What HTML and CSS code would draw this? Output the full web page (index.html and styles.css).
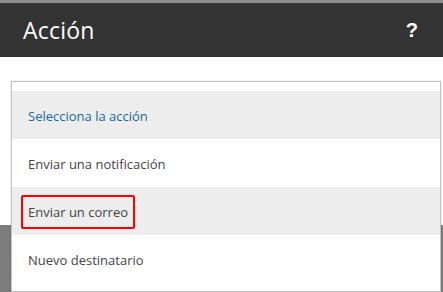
FILE: index.html
```html
<!DOCTYPE html>
<html lang="es">
<head>
<meta charset="utf-8">
<link rel="stylesheet" href="styles.css">
</head>
<body>
<div class="topstrip"></div>
<header class="header">
  <h1 class="title">Acción</h1>
  <span class="help">?</span>
</header>
<main class="main">
  <ul class="dropdown">
    <li class="item item-shaded item-placeholder">Selecciona la acción</li>
    <li class="item">Enviar una notificación</li>
    <li class="item item-shaded"><span class="highlight">Enviar un correo</span></li>
    <li class="item">Nuevo destinatario</li>
  </ul>
</main>
</body>
</html>
```
FILE: styles.css
```css
html, body {
  margin: 0;
  padding: 0;
}
body {
  width: 443px;
  height: 292px;
  overflow: hidden;
  background: #ffffff;
  font-family: "Open Sans", "Noto Sans", sans-serif;
}
.topstrip {
  height: 3px;
  background: #8c8c8c;
}
.header {
  height: 54px;
  background: #333333;
  display: flex;
  align-items: center;
  justify-content: space-between;
  padding: 0 25px 0 23px;
  box-sizing: border-box;
}
.title {
  margin: 0;
  font-size: 23px;
  font-weight: 400;
  color: #ffffff;
  letter-spacing: 0.2px;
}
.help {
  color: #ffffff;
  font-size: 20px;
  font-weight: 700;
  font-family: "Liberation Sans", Arial, sans-serif;
}
.main {
  height: 235px;
  padding: 24px 2px 0 11px;
  box-sizing: border-box;
  background: linear-gradient(to bottom, #ffffff 0, #ffffff 168px, #7c7c7c 168px);
}
.dropdown {
  list-style: none;
  margin: 0;
  padding: 9px 0 8px;
  background: #ffffff;
  border: 1px solid #c2c2c2;
  box-shadow: 0 0 2px rgba(0, 0, 0, 0.15);
  height: 211px;
  box-sizing: border-box;
  overflow: hidden;
}
.item {
  height: 48px;
  display: flex;
  align-items: center;
  padding-left: 16px;
  padding-top: 1px;
  box-sizing: border-box;
  font-size: 13px;
  color: #444444;
}
.item-shaded {
  background: #ededed;
}
.item-placeholder {
  color: #17699c;
}
.highlight {
  display: inline-block;
  margin-left: -7px;
  padding: 6px 5px 6px 5px;
  border: 2px solid #ff0000;
  border-radius: 2px;
}
```
